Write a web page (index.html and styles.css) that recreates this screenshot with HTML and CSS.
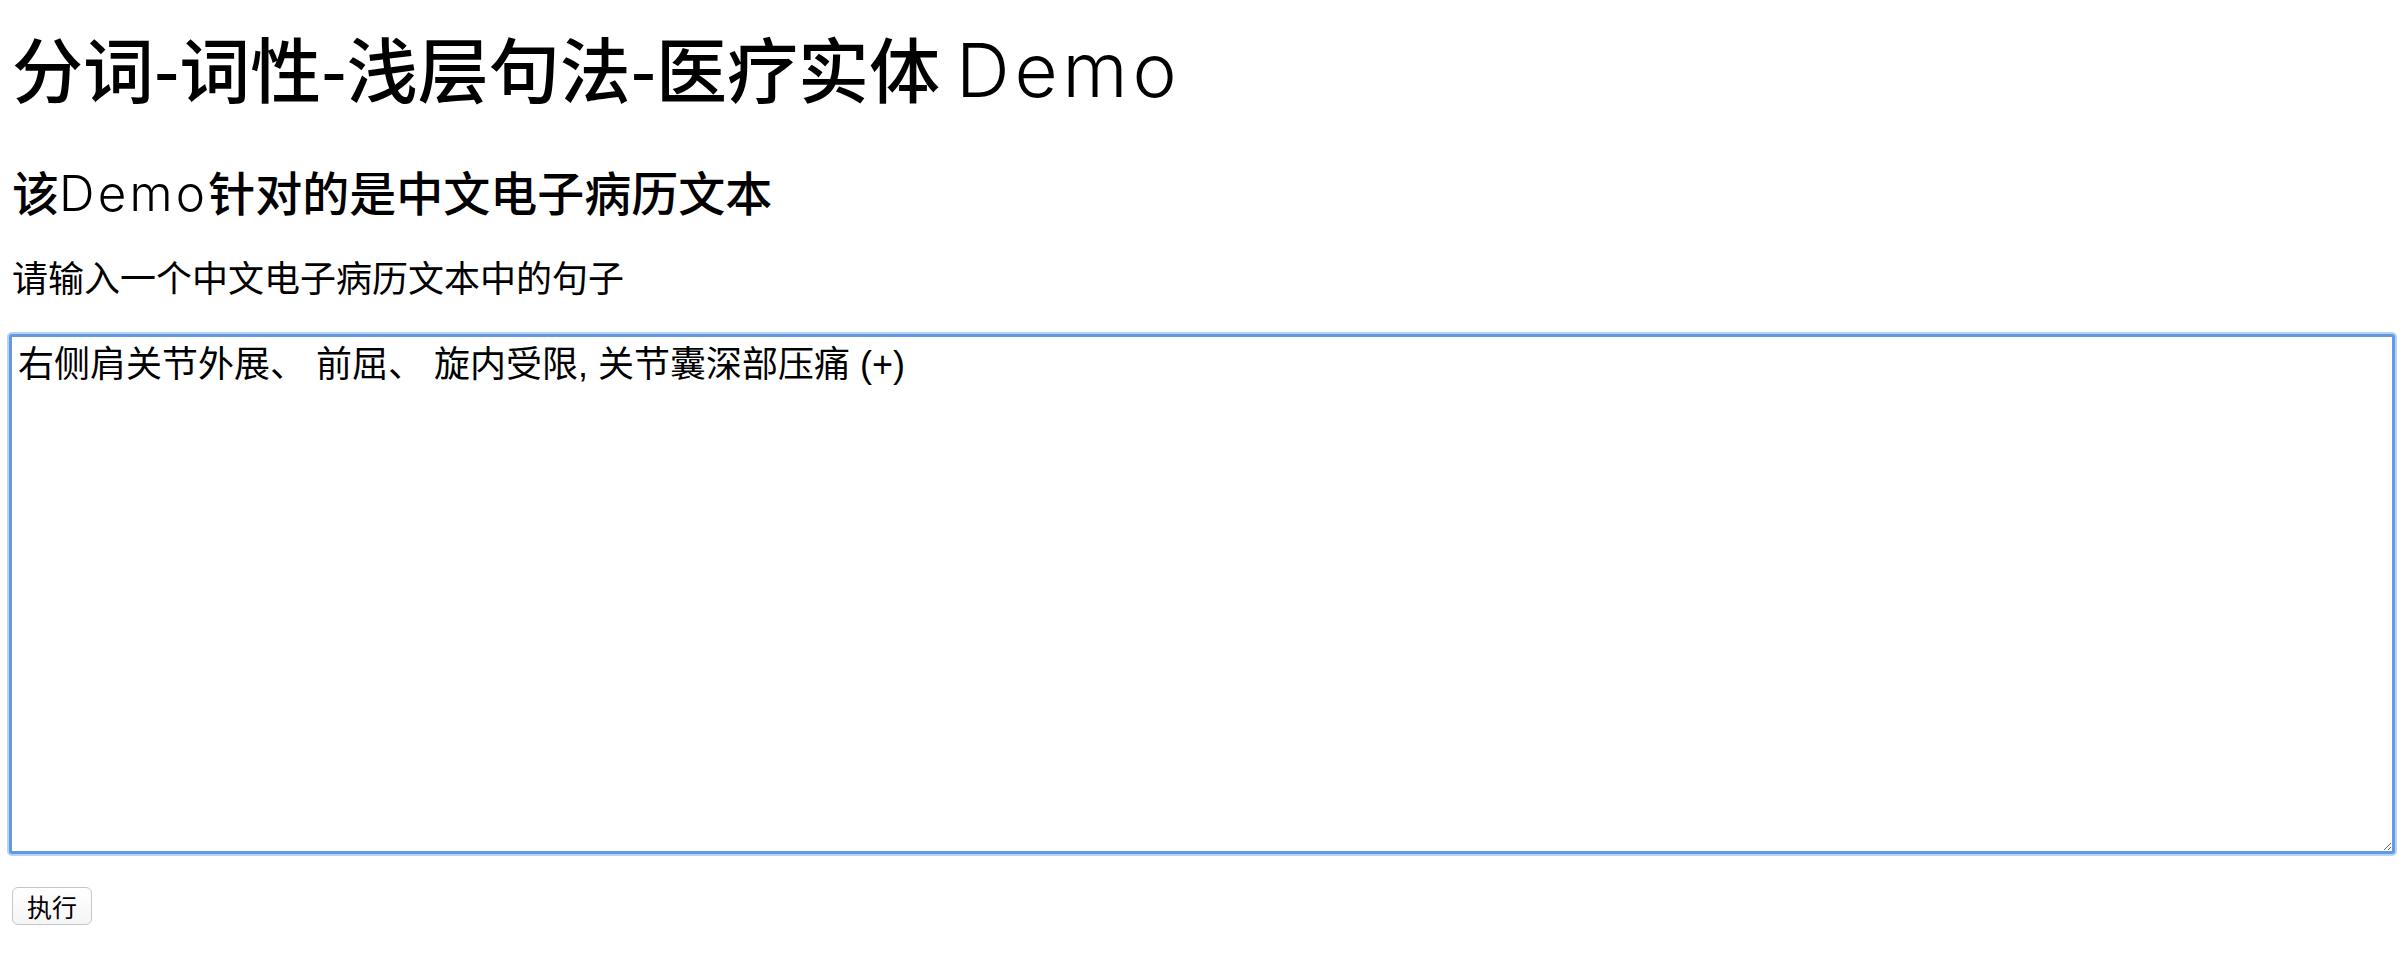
FILE: index.html
```html
<!DOCTYPE html>
<html lang="zh-CN">
<head>
<meta charset="utf-8">
<title>分词-词性-浅层句法-医疗实体 Demo</title>
<link rel="stylesheet" href="styles.css">
</head>
<body>
<h1 class="title">分词-词性-浅层句法-医疗实体 <span class="latin">Demo</span></h1>
<h2 class="subtitle">该<span class="latin">Demo</span>针对的是中文电子病历文本</h2>
<p class="prompt">请输入一个中文电子病历文本中的句子</p>
<form class="form">
<textarea class="input">右侧肩关节外展、 前屈、 旋内受限, 关节囊深部压痛 (+)</textarea>
<button type="button" class="run">执行</button>
</form>
</body>
</html>
```
FILE: styles.css
```css
html, body {
  margin: 0;
  background: #ffffff;
}
body {
  padding: 0 12px;
  color: #000;
  font-family: "Liberation Sans", "Noto Sans CJK SC", sans-serif;
}
.latin {
  font-family: Inter, "DejaVu Sans", sans-serif;
  font-weight: 300;
  font-size: 1.05em;
  line-height: 1;
  letter-spacing: 0.065em;
}
.title {
  margin: 24px 0 0;
  font-family: "Noto Sans CJK SC", sans-serif;
  font-size: 71px;
  line-height: 84px;
  font-weight: 500;
}
.subtitle {
  margin: 55px 0 0;
  font-family: "Noto Sans CJK SC", sans-serif;
  font-size: 47px;
  line-height: 56px;
  font-weight: 500;
}
.prompt {
  margin: 36px 0 0;
  font-family: "Noto Sans CJK SC", sans-serif;
  font-size: 36px;
  line-height: 43px;
  font-weight: 400;
}
.form {
  margin: 36px 0 0;
  display: flex;
  flex-direction: column;
  align-items: flex-start;
}
.input {
  box-sizing: border-box;
  width: calc(100% + 6px);
  margin: 0 -3px;
  height: 520px;
  border: 3px solid #6299e2;
  border-radius: 3px;
  box-shadow: 0 0 0 2px #b6d2f6;
  outline: none;
  padding: 6px 6px;
  font-family: "Liberation Sans", "Noto Sans CJK SC", sans-serif;
  font-size: 36px;
  line-height: 43px;
  color: #000;
  resize: both;
}
.run {
  margin-top: 33px;
  box-sizing: border-box;
  width: 80px;
  height: 38px;
  padding: 0;
  border: 1px solid #c6c6c6;
  border-radius: 6px;
  background: linear-gradient(#ffffff, #f5f5f5);
  font-family: "Noto Sans CJK SC", sans-serif;
  font-size: 25px;
  line-height: 30px;
  color: #000;
}
```
